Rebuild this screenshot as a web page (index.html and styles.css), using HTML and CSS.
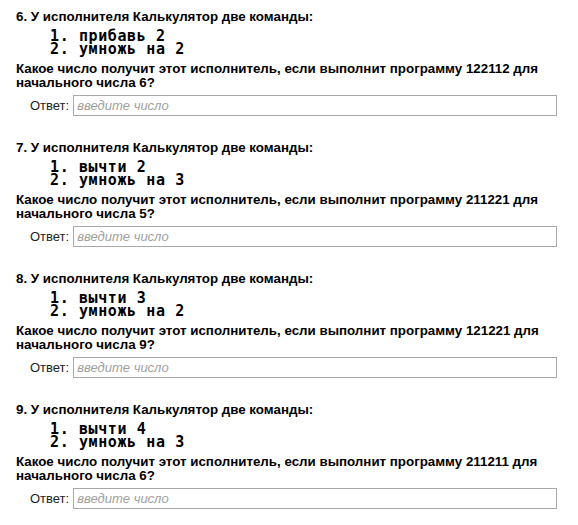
FILE: index.html
```html
<!DOCTYPE html>
<html lang="ru">
<head>
<meta charset="utf-8">
<link rel="stylesheet" href="styles.css">
</head>
<body>
<div class="tasks">
  <div class="task">
    <div class="title">6. У исполнителя Калькулятор две команды:</div>
    <div class="cmds">
      <div class="cmd">1. прибавь 2</div>
      <div class="cmd">2. умножь на 2</div>
    </div>
    <div class="question">Какое число получит этот исполнитель, если выполнит программу 122112 для<br>начального числа 6?</div>
    <div class="answer"><label class="label">Ответ:</label><input class="field" type="text" placeholder="введите число"></div>
  </div>
  <div class="task">
    <div class="title">7. У исполнителя Калькулятор две команды:</div>
    <div class="cmds">
      <div class="cmd">1. вычти 2</div>
      <div class="cmd">2. умножь на 3</div>
    </div>
    <div class="question">Какое число получит этот исполнитель, если выполнит программу 211221 для<br>начального числа 5?</div>
    <div class="answer"><label class="label">Ответ:</label><input class="field" type="text" placeholder="введите число"></div>
  </div>
  <div class="task">
    <div class="title">8. У исполнителя Калькулятор две команды:</div>
    <div class="cmds">
      <div class="cmd">1. вычти 3</div>
      <div class="cmd">2. умножь на 2</div>
    </div>
    <div class="question">Какое число получит этот исполнитель, если выполнит программу 121221 для<br>начального числа 9?</div>
    <div class="answer"><label class="label">Ответ:</label><input class="field" type="text" placeholder="введите число"></div>
  </div>
  <div class="task">
    <div class="title">9. У исполнителя Калькулятор две команды:</div>
    <div class="cmds">
      <div class="cmd">1. вычти 4</div>
      <div class="cmd">2. умножь на 3</div>
    </div>
    <div class="question">Какое число получит этот исполнитель, если выполнит программу 211211 для<br>начального числа 6?</div>
    <div class="answer"><label class="label">Ответ:</label><input class="field" type="text" placeholder="введите число"></div>
  </div>
</div>
</body>
</html>
```
FILE: styles.css
```css
html, body {
  margin: 0;
  padding: 0;
  background: #fff;
}
body {
  padding: 9px 0 0 16px;
  color: #000;
  font-family: "Liberation Sans", Arial, sans-serif;
}
.tasks {
  display: flex;
  flex-direction: column;
  gap: 24px;
}
.title {
  font-weight: bold;
  font-size: 13.33px;
  line-height: 15px;
}
.cmds {
  margin: 6px 0 0 34px;
  font-family: "DejaVu Sans Mono", monospace;
  font-weight: bold;
  font-size: 15px;
  letter-spacing: 0.6px;
  line-height: 13px;
}
.cmd {
  white-space: pre;
}
.question {
  margin-top: 6px;
  font-weight: bold;
  font-size: 13.33px;
  line-height: 14px;
}
.answer {
  margin-top: 5px;
  padding-left: 14px;
  display: flex;
  align-items: center;
  gap: 4px;
}
.label {
  font-size: 13px;
  color: #222;
}
.field {
  box-sizing: border-box;
  width: 484px;
  height: 21px;
  margin: 0;
  padding: 0 3px;
  border: 1px solid #a9a9a9;
  font-family: "Liberation Sans", Arial, sans-serif;
  font-size: 13px;
  outline: none;
}
.field::placeholder {
  color: #a0a0a0;
  font-style: italic;
}
```
